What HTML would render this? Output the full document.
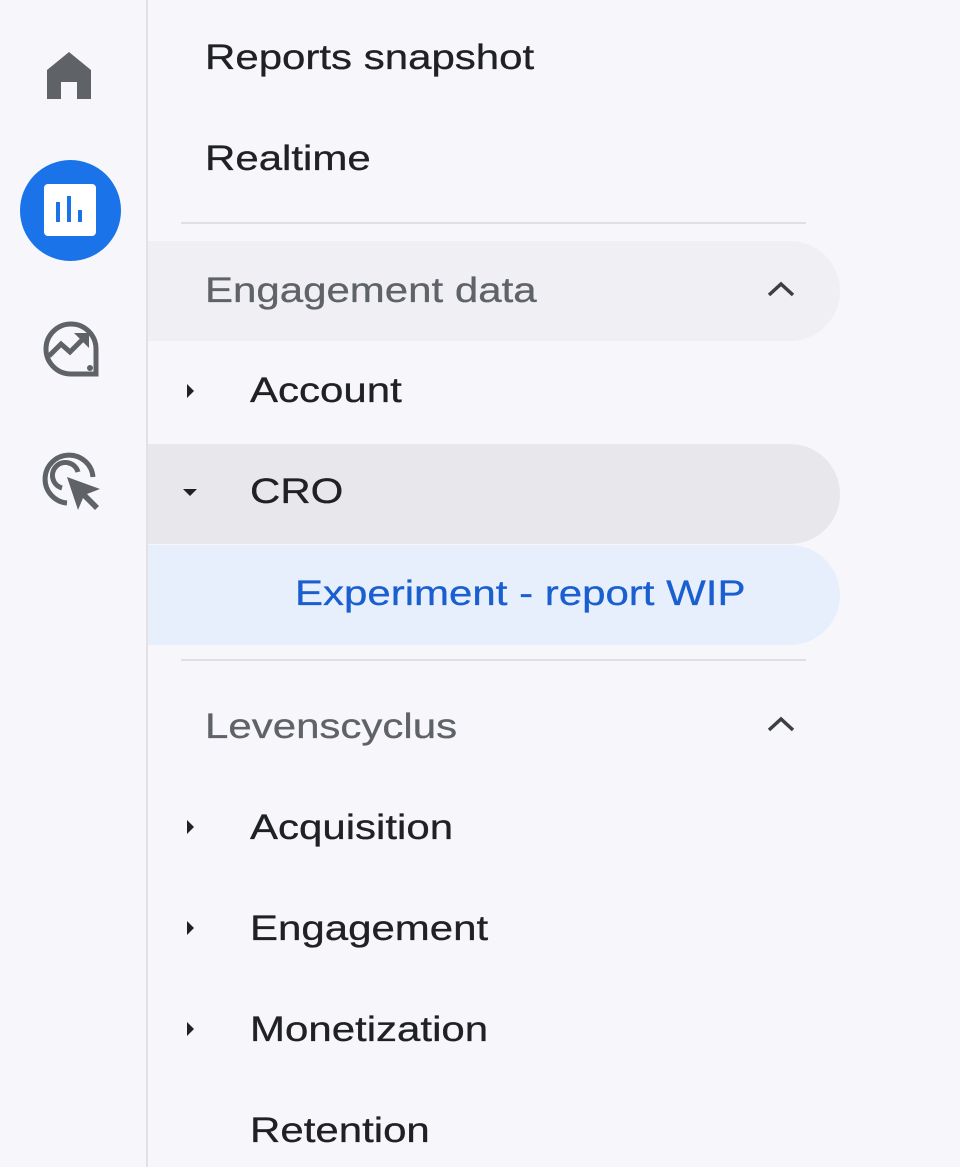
<!DOCTYPE html>
<html><head><style>
body{margin:0;width:960px;height:1167px;background:#f7f7fb;font-family:"Liberation Sans",sans-serif;position:relative;overflow:hidden}
.vl{position:absolute;left:146px;top:0;width:2px;height:1167px;background:#e2e2e6}
.t{position:absolute;font-size:35px;line-height:40px;color:#202124;white-space:nowrap;transform:scaleX(1.2);transform-origin:0 0;-webkit-text-stroke:0.3px currentColor}
.pill{position:absolute;left:148px;width:692px;height:100px;border-radius:0 50px 50px 0}
.hr{position:absolute;left:181px;width:625px;height:2px;background:#e0e0e4}
.tri{position:absolute;width:0;height:0}
.r{border-top:7px solid transparent;border-bottom:7px solid transparent;border-left:7px solid #202124}
.d{border-left:7px solid transparent;border-right:7px solid transparent;border-top:7px solid #202124}
</style></head><body>
<div class="vl"></div>
<svg style="position:absolute;left:44px;top:50px" width="50" height="50" viewBox="0 0 50 50"><path d="M3 20 L25 2 L47 20 V49 H33 V32 H17 V49 H3 Z" fill="#5f6368"/></svg>
<div style="position:absolute;left:20px;top:160px;width:101px;height:101px;border-radius:50%;background:#1a73e8"></div>
<div style="position:absolute;left:44px;top:184px;width:52px;height:52px;background:#fff;border-radius:4px"></div>
<div style="position:absolute;left:56px;top:202px;width:4px;height:20px;background:#1a73e8"></div>
<div style="position:absolute;left:67px;top:196px;width:4px;height:26px;background:#1a73e8"></div>
<div style="position:absolute;left:78px;top:210px;width:4px;height:12px;background:#1a73e8"></div>
<svg style="position:absolute;left:40px;top:318px" width="62" height="62" viewBox="0 0 62 62"><path d="M56 31 A25 25 0 1 0 31 56 H56 Z" fill="none" stroke="#5f6368" stroke-width="5"/><path d="M9 38 L21 26 L30 34 L45 19" fill="none" stroke="#5f6368" stroke-width="5"/><path d="M34 15 H49 V30 Z" fill="#5f6368"/><circle cx="50" cy="50" r="3" fill="#5f6368"/></svg>
<svg style="position:absolute;left:40px;top:450px" width="62" height="62" viewBox="0 0 62 62"><path d="M53 27 A24 24 0 1 0 27 53" fill="none" stroke="#5f6368" stroke-width="5"/><path d="M38 22 A13 13 0 1 0 22 38" fill="none" stroke="#5f6368" stroke-width="5"/><path d="M27 27 L60 39 L47 44 L59 56 L55 60 L43 48 L38 60 Z" fill="#5f6368"/></svg>

<div class="t" style="left:205px;top:38px">Reports snapshot</div>
<div class="t" style="left:205px;top:139px">Realtime</div>
<div class="hr" style="top:222px"></div>
<div class="pill" style="top:241px;background:#f0f0f4"></div>
<div class="t" style="left:205px;top:271px;color:#5f6368">Engagement data</div>
<svg style="position:absolute;left:766px;top:280px" width="30" height="20"><path d="M3 15 L15 4 L27 15" fill="none" stroke="#3c4043" stroke-width="3.5"/></svg>
<div class="tri r" style="left:187px;top:384px"></div>
<div class="t" style="left:250px;top:371px">Account</div>
<div class="pill" style="top:444px;background:#e8e8ec"></div>
<div class="tri d" style="left:183px;top:489px"></div>
<div class="t" style="left:250px;top:472px">CRO</div>
<div class="pill" style="top:545px;background:#e7effc"></div>
<div class="t" style="left:295px;top:574px;color:#1a5fd0">Experiment - report WIP</div>
<div class="hr" style="top:659px"></div>
<div class="t" style="left:205px;top:707px;color:#5f6368">Levenscyclus</div>
<svg style="position:absolute;left:766px;top:715px" width="30" height="20"><path d="M3 15 L15 4 L27 15" fill="none" stroke="#3c4043" stroke-width="3.5"/></svg>
<div class="tri r" style="left:187px;top:820px"></div>
<div class="t" style="left:250px;top:808px">Acquisition</div>
<div class="tri r" style="left:187px;top:921px"></div>
<div class="t" style="left:250px;top:909px">Engagement</div>
<div class="tri r" style="left:187px;top:1022px"></div>
<div class="t" style="left:250px;top:1010px">Monetization</div>
<div class="t" style="left:250px;top:1111px">Retention</div>
</body></html>
